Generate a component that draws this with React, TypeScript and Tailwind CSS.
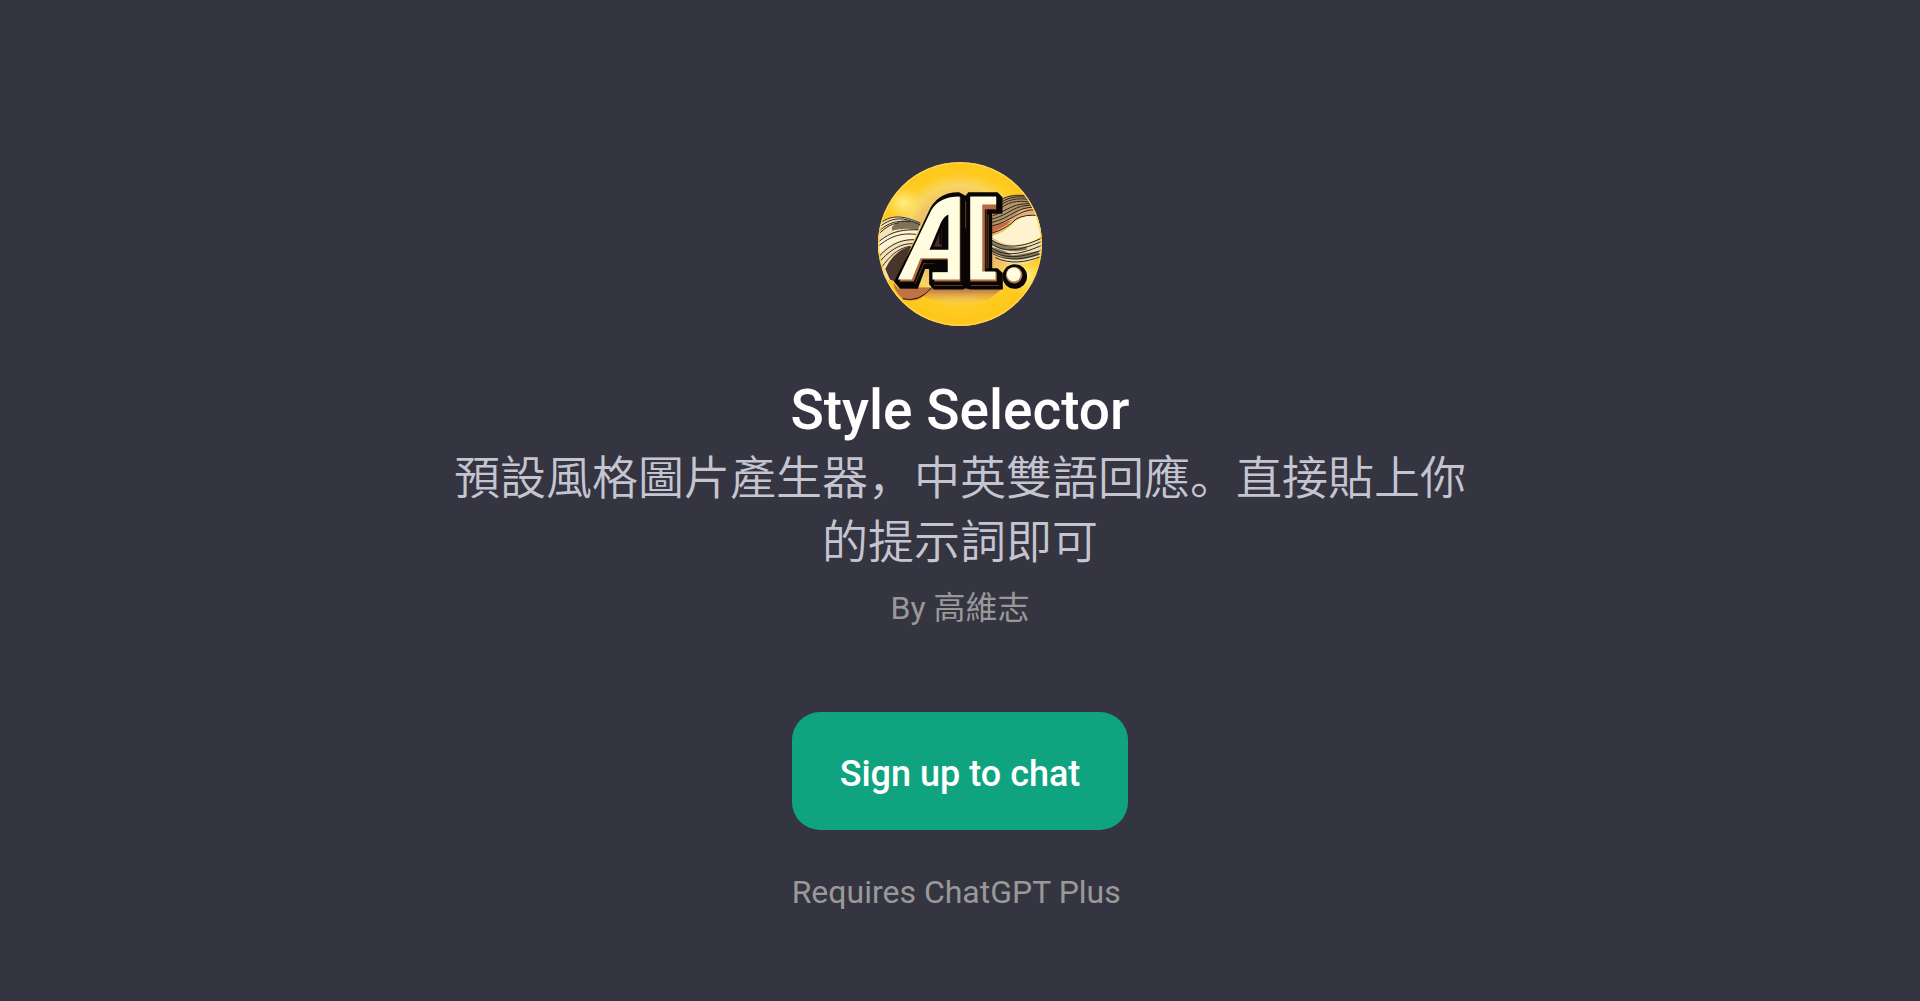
import type { ReactNode } from "react";

const STRANDS_LEFT = [
  "M20 214 C60 176 100 184 150 206",
  "M18 226 C62 182 104 188 150 212",
  "M18 238 C56 196 90 200 120 202",
  "M16 248 C50 210 70 208 84 206",
  "M18 268 C62 226 104 226 144 226",
  "M18 280 C62 240 100 236 136 240",
  "M20 312 C64 262 100 256 130 256",
  "M24 326 C62 280 96 268 126 268",
  "M28 346 C66 292 92 280 120 276",
];

const STRANDS_RIGHT = [
  "M388 138 C420 118 450 122 476 124",
  "M388 146 C424 122 456 126 482 130",
  "M388 154 C424 128 456 132 486 136",
  "M388 163 C428 134 452 140 488 143",
  "M368 184 C420 164 430 144 490 148",
  "M366 194 C420 180 430 150 492 152",
  "M366 204 C426 188 438 158 494 158",
  "M366 214 C420 204 450 162 498 166",
  "M366 258 C410 286 460 278 518 250",
  "M366 270 C410 300 462 284 518 260",
  "M366 282 C412 312 462 296 518 272",
  "M366 290 C412 318 462 308 518 286",
  "M368 298 C414 324 464 314 518 296",
  "M376 310 C418 330 466 326 514 306",
];

function Avatar() {
  return (
    <svg viewBox="22 22 494 494" className="size-[164px]" role="img" aria-label="Style Selector logo">
      <defs>
        <clipPath id="disc">
          <circle cx="269" cy="269" r="247" />
        </clipPath>
        <radialGradient id="sun" cx="269" cy="260" r="247" gradientUnits="userSpaceOnUse">
          <stop offset="0" stopColor="#dc9b68" />
          <stop offset="0.45" stopColor="#e9b36c" />
          <stop offset="0.68" stopColor="#f8d562" />
          <stop offset="0.82" stopColor="#ffcb20" />
          <stop offset="1" stopColor="#ffc61b" />
        </radialGradient>
        <linearGradient id="shade" x1="0" y1="0" x2="0" y2="1">
          <stop offset="0" stopColor="#a96743" />
          <stop offset="1" stopColor="#eda22b" stopOpacity="0" />
        </linearGradient>
        <radialGradient id="glow">
          <stop offset="0" stopColor="#fff08a" />
          <stop offset="1" stopColor="#ffe26a" stopOpacity="0" />
        </radialGradient>
      </defs>
      <g clipPath="url(#disc)">
        <rect x="20" y="20" width="500" height="500" fill="url(#sun)" />
        <ellipse cx="98" cy="145" rx="62" ry="50" fill="url(#glow)" />
        <ellipse cx="465" cy="365" rx="75" ry="60" fill="url(#glow)" />
        <path d="M130 400 H400 L355 438 Q260 462 165 432 Z" fill="url(#shade)" />

        {/* left ribbon */}
        <path d="M18 212 Q78 160 154 208 L112 292 L76 384 L38 372 Z" fill="#f5e3b7" />
        <path d="M64 218 Q92 182 150 208 L142 226 Q104 220 64 228 Z" fill="#7d7259" />
        <path d="M44 344 Q72 286 122 276 L78 384 L58 376 Z" fill="#49352b" />
        <path d="M22 262 Q70 224 140 230 L130 254 Q70 252 22 300 Z" fill="#fff4d4" />
        <path d="M68 386 L84 404 L180 402 Q150 450 100 436 Q72 416 68 386 Z" fill="#bd7344" />
        <path d="M96 434 Q146 446 184 400" fill="none" stroke="#251912" strokeWidth="3" />
        <g fill="none" stroke="#29221b" strokeWidth="3">
          {STRANDS_LEFT.map((d) => <path key={d} d={d} />)}
        </g>

        {/* right ribbon */}
        <path d="M386 138 Q430 114 482 124 L500 156 Q450 168 420 194 Q396 208 364 218 L364 182 L390 164 Z" fill="#b3946a" />
        <path d="M366 218 Q418 204 450 166 L498 158 L502 180 Q450 180 412 212 L364 238 Z" fill="#e3b07c" />
        <path d="M364 216 Q400 206 424 196 L410 212 L364 236 Z" fill="#c46b45" />
        <path d="M362 246 Q408 234 434 202 Q462 178 506 182 L520 242 Q472 278 422 272 Q384 266 362 246 Z" fill="#fff3cf" />
        <path d="M362 250 Q420 292 520 250 L516 304 Q466 342 404 324 L364 294 Z" fill="#f0dfb1" />
        <path d="M364 256 Q416 288 470 276 L470 286 Q418 300 364 272 Z" fill="#857c61" />
        <path d="M364 278 Q408 288 426 304 L506 290 L508 302 Q448 324 408 312 L364 294 Z" fill="#857a60" />
        <g fill="none" stroke="#29221b" strokeWidth="3">
          <path d="M366 236 Q408 224 438 194 Q466 178 508 184" />
          {STRANDS_RIGHT.map((d) => <path key={d} d={d} />)}
        </g>

        {/* letter shadow */}
        <path
          fill="#080604"
          d="M70 382 L134 258 L172 176 Q198 112 266 113 L286 124 L294 113 H382 L397 128 V178 H366 V342 H382 L398 356 V406 H300 L286 402 L278 406 H190 L176 390 V344 H164 L142 404 H88 Z"
        />
        <path
          fill="none"
          stroke="#6b3b25"
          strokeWidth="3"
          d="M134 388 L160 328 H192 M190 394 H276 M302 394 H386 M286 140 V222 M348 160 V344 M375 156 V168 M354 180 V342"
        />
        <path
          fill="#b36a42"
          d="M86 382 L130 382 L156 316 H238 V354 H192 V382 H270 V128 H264 Z M300 382 H380 V354 H344 V164 H378 V128 H300 Z"
        />

        {/* letters */}
        <path
          fill="#fffce0"
          d="M82 376 L182 168 Q206 126 268 126 V376 H186 V354 H232 V312 H150 L124 376 Z"
        />
        <path fill="#080604" d="M166 328 H230 V350 H178 Z" />
        <path fill="#080604" d="M177 286 L210 208 Q218 188 234 180 V286 Z" />
        <path fill="#4b2e24" d="M190 277 L214 220 V277 Z" />
        <path fill="#080604" d="M207 226 L213 220 V270 H207 Z" />
        <path fill="#fffce0" d="M300 126 H378 V150 H336 V352 H376 V376 H300 Z" />

        <circle cx="434" cy="367" r="37" fill="#080604" />
        <circle cx="432" cy="363" r="25" fill="#b67345" />
        <circle cx="431" cy="361" r="21" fill="#fffce0" />
        <circle cx="269" cy="269" r="245" fill="none" stroke="#ffd653" strokeWidth="4" />
      </g>
    </svg>
  );
}

function Note({ children, className }: { children: ReactNode; className: string }) {
  return <p className={`text-[32px] leading-10 text-[#999999] ${className}`}>{children}</p>;
}

export default function App() {
  return (
    <main className="min-h-screen bg-[#353541] px-6 pt-[162px] pb-20 flex flex-col items-center text-center font-[Roboto,'Noto_Sans_CJK_SC',sans-serif]">
      <Avatar />
      <h1 className="mt-12 text-[55px] leading-[72px] font-medium text-white">Style Selector</h1>
      <p className="w-full max-w-[1030px] text-[46px] leading-16 font-[350] text-[#c5c5d2]">
        預設風格圖片產生器，中英雙語回應。直接貼上你的提示詞即可
      </p>
      <Note className="mt-[14px]">By 高維志</Note>
      <div className="mt-[84px] flex flex-col items-start">
        <button
          type="button"
          className="rounded-[28px] bg-[#10a37f] px-12 pt-[38px] pb-8 text-[36px] leading-12 font-medium text-white"
        >
          Sign up to chat
        </button>
        <Note className="mt-[42px]">Requires ChatGPT Plus</Note>
      </div>
    </main>
  );
}
